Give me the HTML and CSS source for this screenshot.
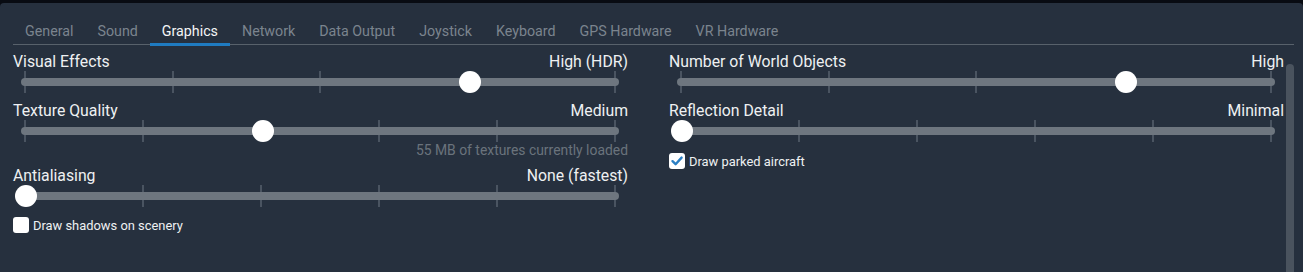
FILE: index.html
```html
<!DOCTYPE html>
<html lang="en">
<head>
    <meta charset="UTF-8">
    <title>Settings - Graphics</title>
    <link rel="stylesheet" href="styles.css">
</head>
<body>
    <div class="window">
        <nav class="tabs">
            <span class="tab">General</span>
            <span class="tab">Sound</span>
            <span class="tab active">Graphics</span>
            <span class="tab">Network</span>
            <span class="tab">Data Output</span>
            <span class="tab">Joystick</span>
            <span class="tab">Keyboard</span>
            <span class="tab">GPS Hardware</span>
            <span class="tab">VR Hardware</span>
        </nav>
        <div class="content">
            <div class="col">
                <div class="setting">
                    <div class="setting-head"><span>Visual Effects</span><span>High (HDR)</span></div>
                    <div class="slider">
                        <div class="rail">
                            <i></i><i></i><i></i><i></i><i></i>
                            <span class="thumb" style="left: 75%"></span>
                        </div>
                    </div>
                </div>
                <div class="setting">
                    <div class="setting-head"><span>Texture Quality</span><span>Medium</span></div>
                    <div class="slider">
                        <div class="rail">
                            <i></i><i></i><i></i><i></i><i></i><i></i>
                            <span class="thumb" style="left: 40%"></span>
                        </div>
                    </div>
                    <div class="note">55 MB of textures currently loaded</div>
                </div>
                <div class="setting">
                    <div class="setting-head"><span>Antialiasing</span><span>None (fastest)</span></div>
                    <div class="slider">
                        <div class="rail">
                            <i></i><i></i><i></i><i></i><i></i><i></i>
                            <span class="thumb" style="left: 0%"></span>
                        </div>
                    </div>
                </div>
                <label class="check">
                    <span class="box"></span>
                    <span class="check-text">Draw shadows on scenery</span>
                </label>
            </div>
            <div class="col">
                <div class="setting">
                    <div class="setting-head"><span>Number of World Objects</span><span>High</span></div>
                    <div class="slider">
                        <div class="rail">
                            <i></i><i></i><i></i><i></i><i></i>
                            <span class="thumb" style="left: 75%"></span>
                        </div>
                    </div>
                </div>
                <div class="setting">
                    <div class="setting-head"><span>Reflection Detail</span><span>Minimal</span></div>
                    <div class="slider">
                        <div class="rail">
                            <i></i><i></i><i></i><i></i><i></i><i></i>
                            <span class="thumb" style="left: 0%"></span>
                        </div>
                    </div>
                </div>
                <label class="check checked">
                    <span class="box">
                        <svg width="14" height="14" viewBox="0 0 14 14"><path d="M2.5 7.2 L5.6 10.2 L11.6 3.6" fill="none" stroke="#2a7fc4" stroke-width="2.4" stroke-linecap="round" stroke-linejoin="round"/></svg>
                    </span>
                    <span class="check-text">Draw parked aircraft</span>
                </label>
            </div>
            <div class="scrollbar"></div>
        </div>
    </div>
</body>
</html>
```

FILE: styles.css
```css
html, body {
    height: 100%;
}
body {
    margin: 0;
    background: #080b12;
    font-family: Roboto, "Liberation Sans", sans-serif;
    color: #eef0f2;
    overflow: hidden;
}
.window {
    box-sizing: border-box;
    height: calc(100% - 3px);
    margin-top: 3px;
    background: #26303e;
    border-radius: 4px 4px 0 0;
    display: flex;
    flex-direction: column;
}
.tabs {
    display: flex;
    align-items: flex-end;
    height: 41px;
    margin: 0 9px 0 13px;
    border-bottom: 1px solid #58616b;
}
.tab {
    position: relative;
    padding: 0 12px 4px;
    font-size: 14.25px;
    line-height: 18px;
    color: #7b848e;
}
.tab.active {
    color: #f4f5f6;
}
.tab.active::after {
    content: "";
    position: absolute;
    left: 0;
    right: 0;
    bottom: -2px;
    height: 3px;
    background: #1f7bc1;
}
.content {
    flex: 1;
    display: flex;
    gap: 41px;
    padding: 7px 0 0 13px;
}
.col {
    width: 615px;
}
.setting + .setting {
    margin-top: 8px;
}
.setting-head {
    display: flex;
    justify-content: space-between;
    padding-top: 1px;
    font-size: 15.8px;
    line-height: 18px;
}
.slider {
    position: relative;
    height: 22px;
    margin: 0 9px 0 8px;
}
.slider::before {
    content: "";
    position: absolute;
    left: 0;
    right: 0;
    top: 7px;
    height: 8px;
    border-radius: 4px;
    background: #6e767f;
    z-index: 1;
}
.rail {
    position: relative;
    height: 100%;
    margin: 0 3px;
    display: flex;
    justify-content: space-between;
}
.rail i {
    width: 2px;
    height: 100%;
    background: #4a5461;
}
.thumb {
    position: absolute;
    top: 0;
    width: 22px;
    height: 22px;
    margin-left: -9px;
    border-radius: 50%;
    background: #fff;
    z-index: 2;
}
.note {
    text-align: right;
    font-size: 13.9px;
    line-height: 16px;
    color: #6a737c;
}
.check {
    display: flex;
    align-items: center;
    gap: 4px;
    margin-top: 9px;
    font-size: 12.9px;
    line-height: 16px;
}
.check-text {
    padding-top: 2px;
}
.col:nth-child(2) .check {
    margin-top: 10px;
}
.box {
    width: 16px;
    height: 16px;
    border-radius: 3px;
    background: #fff;
    display: flex;
    align-items: center;
    justify-content: center;
}
.scrollbar {
    width: 8px;
    margin: 12px 0 0 -39px;
    border-radius: 4px 4px 0 0;
    background: #4a535e;
}
```
